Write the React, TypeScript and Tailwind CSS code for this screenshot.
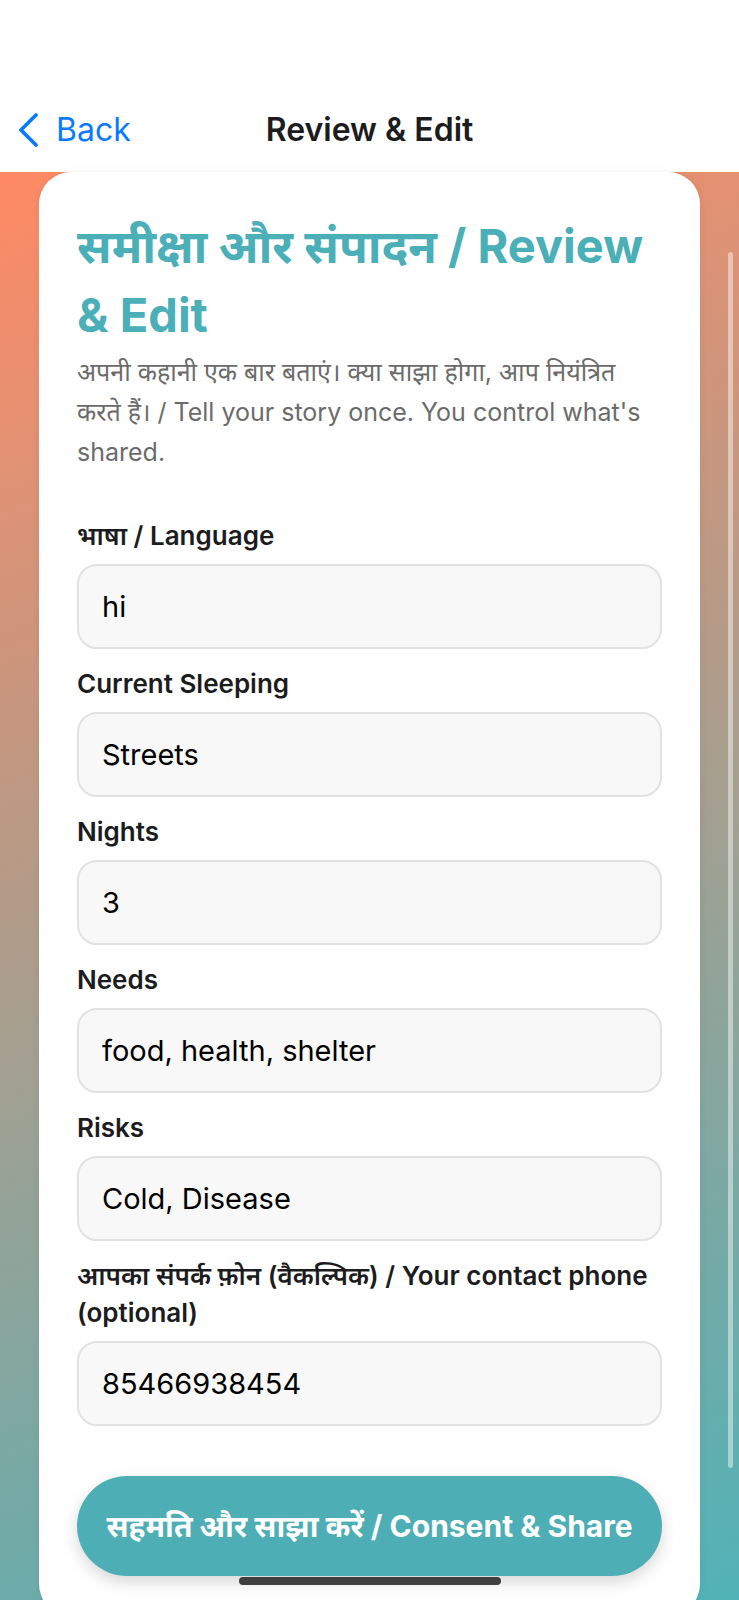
import { ChangeEvent, useState } from 'react';

const fields = [
  { id: 'language', label: 'भाषा / Language', value: 'hi' },
  { id: 'sleeping', label: 'Current Sleeping', value: 'Streets' },
  { id: 'nights', label: 'Nights', value: '3' },
  { id: 'needs', label: 'Needs', value: 'food, health, shelter' },
  { id: 'risks', label: 'Risks', value: 'Cold, Disease' },
  { id: 'phone', label: 'आपका संपर्क फ़ोन (वैकल्पिक) / Your contact phone (optional)', value: '85466938454' },
];

function BackChevron() {
  return (
    <svg width="22" height="36" viewBox="0 0 22 36" fill="none">
      <polyline
        points="19,3 4,18 19,33"
        stroke="#0a7aff"
        strokeWidth="3.8"
        strokeLinecap="round"
        strokeLinejoin="round"
      />
    </svg>
  );
}

export default function App() {
  const [values, setValues] = useState<Record<string, string>>(
    Object.fromEntries(fields.map((f) => [f.id, f.value]))
  );

  const update = (id: string) => (e: ChangeEvent<HTMLInputElement>) =>
    setValues((v) => ({ ...v, [id]: e.target.value }));

  return (
    <div className="relative w-[739px] h-[1600px] overflow-hidden bg-white font-['Inter','Noto_Sans',sans-serif] flex flex-col">
      {/* Nav bar */}
      <header className="h-[172px] shrink-0 bg-white pt-[88px]">
        <div className="h-[84px] grid grid-cols-[1fr_auto_1fr] items-center">
          <button className="flex items-center gap-[17px] pl-[17px] text-[32px] text-[#0a7aff]">
            <BackChevron />
            <span>Back</span>
          </button>
          <h1 className="text-[32px] font-semibold text-[#1c1c1e]">Review &amp; Edit</h1>
          <div />
        </div>
      </header>

      {/* Gradient body */}
      <main className="flex-1 bg-[linear-gradient(160deg,#ff8a65_0%,#4fb3b8_100%)] px-[39px]">
        <div className="bg-white rounded-[32px] px-[38px] pt-[39px] pb-[40px] shadow-[0_0_8px_rgba(0,0,0,0.06)]">
          <h2 className="text-[47px] leading-[69px] font-bold text-[#4aafb7]">
            समीक्षा और संपादन / Review &amp;&nbsp;Edit
          </h2>
          <p className="mt-[3px] text-[25px] leading-[40px] text-[#6b6b6b]">
            अपनी कहानी एक बार बताएं। क्या साझा होगा, आप नियंत्रित करते हैं। / Tell your story once. You control
            what's shared.
          </p>

          <div className="mt-[45px] flex flex-col gap-[16px]">
            {fields.map((f) => (
              <label key={f.id} className="flex flex-col">
                <span className="text-[26px] leading-[37px] font-semibold text-[#1c1c1e]">{f.label}</span>
                <input
                  value={values[f.id]}
                  onChange={update(f.id)}
                  className="mt-[10px] h-[85px] rounded-[20px] border-2 border-[#e2e2e2] bg-[#f8f8f8] px-[23px] text-[29px] text-black outline-none"
                />
              </label>
            ))}
          </div>

          <button className="mt-[50px] w-full h-[100px] rounded-full bg-[#4eaeb6] text-white text-[30px] font-bold shadow-[0_6px_16px_rgba(0,0,0,0.16)]">
            सहमति और साझा करें / Consent &amp; Share
          </button>
        </div>
      </main>

      {/* Scroll indicator */}
      <div className="absolute left-[728px] top-[252px] w-[5px] h-[1216px] rounded-full bg-white/45" />

      {/* Home indicator */}
      <div className="absolute left-[239px] top-[1577px] w-[262px] h-[8px] rounded-full bg-[#3f3f3f]" />
    </div>
  );
}
